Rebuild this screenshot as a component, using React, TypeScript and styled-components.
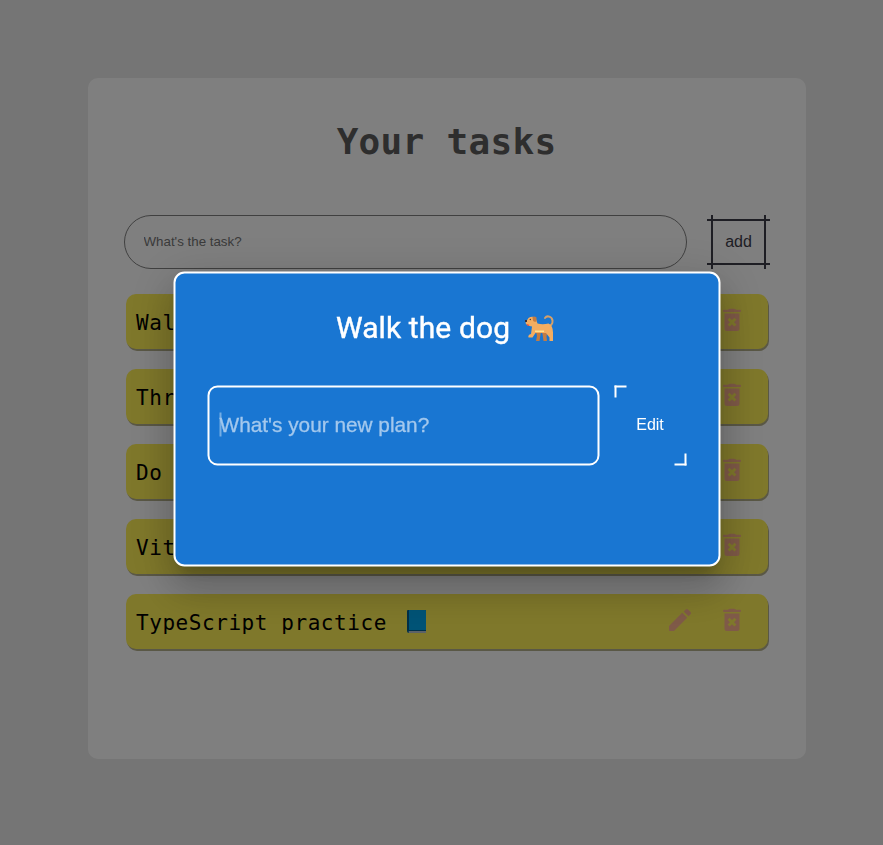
import React from "react";
import styled, { createGlobalStyle } from "styled-components";

const GlobalStyle = createGlobalStyle`
  *, *::before, *::after { box-sizing: border-box; }
  html, body { margin: 0; padding: 0; background: #ebebeb; overflow: hidden; }
`;

const mono = `"DejaVu Sans Mono", "Liberation Mono", monospace`;
const sans = `"Liberation Sans", Arial, sans-serif`;

const Page = styled.main`
  height: 845px;
  padding: 78px 77px 0 88px;
  background: #ebebeb;
`;

const Card = styled.section`
  height: 681px;
  padding: 39px 37px 0 36px;
  border-radius: 10px;
  background: #fff;
`;

const Title = styled.h1`
  margin: 0;
  height: 50px;
  font: bold 36px/50px ${mono};
  letter-spacing: 0.3px;
  text-align: center;
  color: #5c5c5c;
`;

const AddForm = styled.form`
  display: flex;
  justify-content: space-between;
  margin-top: 48px;
`;

const TaskInput = styled.input`
  width: 563px;
  height: 54px;
  padding: 0 18px 2px 18.5px;
  border: 1px solid #808080;
  border-radius: 27px;
  background: transparent;
  font: 13.333px ${sans};
  outline: none;
  &::placeholder { color: #757575; opacity: 1; }
`;

const AddButton = styled.button`
  position: relative;
  width: 55px;
  height: 46px;
  margin: 4px 3px 0 0;
  padding: 0;
  border: 2px solid #3d3d49;
  background: none;
  color: #3d3d49;
  font: 16px ${sans};
  &::before, &::after {
    content: "";
    position: absolute;
    pointer-events: none;
  }
  &::before {
    inset: -2px -6px;
    border: solid #3d3d49;
    border-width: 2px 0;
  }
  &::after {
    inset: -6px -2px;
    border: solid #3d3d49;
    border-width: 0 2px;
  }
`;

const TaskList = styled.ul`
  display: flex;
  flex-direction: column;
  gap: 20px;
  margin: 25px 1px 0 2px;
  padding: 0;
  list-style: none;
`;

const TaskRow = styled.li`
  display: flex;
  align-items: center;
  height: 55px;
  padding: 0 27px 0 10px;
  border-radius: 10px;
  background: #fff056;
  box-shadow: 1px 2px 0 #b4b08c;
`;

const TaskText = styled.span`
  display: flex;
  align-items: center;
  flex: 1;
  padding-top: 2px;
  font: 21px/28px ${mono};
  letter-spacing: 0.56px;
  white-space: pre;
  color: #000;
`;

const Actions = styled.span`
  display: flex;
  gap: 31px;
  margin-top: -3px;
  color: #ffb490;
  svg { display: block; }
`;

const BookSvg = styled.svg`
  margin: -2px 0 0 19px;
`;

const Backdrop = styled.div`
  position: fixed;
  inset: 0;
  display: flex;
  justify-content: center;
  padding: 271.5px 0 0 11px;
  background: rgba(0, 0, 0, 0.5);
`;

const Dialog = styled.div`
  width: 547px;
  height: 295px;
  padding: 31px 31px 0 32px;
  border: 2px solid #fff;
  border-radius: 11px;
  background: #1976d2;
  transform: translate(-0.5px, -0.5px);
  box-shadow:
    0 11px 15px -7px rgba(0, 0, 0, 0.2),
    0 24px 38px 3px rgba(0, 0, 0, 0.14),
    0 9px 46px 8px rgba(0, 0, 0, 0.12);
`;

const DialogTitle = styled.h2`
  display: flex;
  justify-content: center;
  align-items: center;
  gap: 13px;
  height: 46px;
  margin: 0 3px 35px 0;
  font: 400 30px/46px Roboto, sans-serif;
  letter-spacing: 0.1px;
  -webkit-text-stroke: 0.4px #fff;
  color: #fff;
`;

const EditForm = styled.form`
  display: flex;
  gap: 15px;
`;

const PlanField = styled.div`
  display: flex;
  align-items: center;
  width: 392px;
  height: 80px;
  padding: 0 0 1px 10px;
  border: 2px solid #fff;
  border-radius: 10px;
`;

const Caret = styled.span`
  width: 2px;
  height: 24px;
  margin-right: -1.5px;
  background: #75ade4;
`;

const PlanPlaceholder = styled.span`
  font: 20.8px/24px ${sans};
  color: #a3c8ed;
  -webkit-text-stroke: 0.3px #a3c8ed;
`;

const EditButton = styled.button`
  position: relative;
  width: 72px;
  height: 80px;
  padding: 0 0 2px;
  border: 0;
  background: none;
  color: #fff;
  font: 16px/20px ${sans};
  &::before, &::after {
    content: "";
    position: absolute;
    width: 12px;
    height: 12px;
    border: solid #fff;
  }
  &::before { top: 0; left: 0; border-width: 2px 0 0 2px; }
  &::after { right: 0; bottom: 0; border-width: 0 2px 2px 0; }
`;

const PencilIcon = () => (
  <svg width="24" height="24" viewBox="0 0 24 24" fill="currentColor">
    <path d="M1 18 14.200 4.800 19.200 9.800 6 23H1.700Q1 23 1 22.300zM15.700 3.500 17.800 1.400Q18.900.5 20 1.400L22.600 4Q23.500 5.100 22.600 6.200L20.500 8.300z" />
  </svg>
);

const TrashIcon = () => (
  <svg width="18" height="24" viewBox="0 0 18 24" fill="currentColor">
    <path d="M1 1.800H5Q5.500.7 7 .7H11Q12.500.7 13 1.800H17Q18 1.800 18 2.900T17 4H1Q0 4 0 2.900T1 1.800z" />
    <path fillRule="evenodd" d="M1.500 5.500H16.500V20.500Q16.500 23 14 23H4Q1.500 23 1.500 20.500zM9 12.200 6.600 9.800 4.600 11.800 7 14.200 4.600 16.600 6.600 18.600 9 16.200 11.400 18.600 13.400 16.600 11 14.200 13.400 11.800 11.400 9.800z" />
  </svg>
);

const BookIcon = () => (
  <BookSvg width="22" height="26" viewBox="0 0 22 26">
    <path d="M2 1h17q1 0 1 1v22H3q-2 0-2-2V2q0-1 1-1z" fill="#005f91" />
    <path d="M3 1h16q1 0 1 1v19H3z" fill="#00a6ed" />
    <path d="M3 22h17v2H3q-1-1 0-2z" fill="#b9c5d0" />
  </BookSvg>
);

const DogSvg = styled.svg`
  margin-top: 2px;
`;

const DogIcon = () => (
  <DogSvg width="32" height="30" viewBox="0 0 32 30">
    <path d="M24 12.500C27 13 29.500 10.500 29 7C28.500 3 23.500 1.500 21.500 4.500" fill="none" stroke="#d3a06b" strokeWidth="2" strokeLinecap="round" />
    <path d="M12.500 18h5L16 27.500h-3.500l1-5zM18 18h6l-1 5 .5 4.500H20l-1-7z" fill="#c37c43" />
    <path d="M5 4.500Q8 2.500 12 4L14 10Q19 11.500 25 10Q29.500 12 29.500 19V27.500H26V24L22.500 19.500H12L9 24H5Q4 21.500 7.500 20.500L8.500 13Q3 12.500 2 9.500L3 7.500z" fill="#f3ad61" />
    <path d="M9 3.500Q11 2.500 13 4V8Q10.500 9 9.500 7z" fill="#c37c43" />
    <path d="M11.500 17h9v1.500h-9z" fill="#ffe290" />
    <circle cx="6.800" cy="6" r=".7" fill="#45343d" />
    <path d="M1.500 6.500h2v2h-2z" fill="#34313e" />
    <path d="M3 10.500l3 1-1.500 1z" fill="#f8312f" />
  </DogSvg>
);

const tasks = [
  { text: "Walk the dog" },
  { text: "Throw out the trash" },
  { text: "Do the dishes" },
  { text: "Vite practice" },
  { text: "TypeScript practice", book: true },
];

export default function App() {
  return (
    <>
      <GlobalStyle />
      <Page>
        <Card>
          <Title>Your tasks</Title>
          <AddForm>
            <TaskInput placeholder="What's the task?" />
            <AddButton type="button">add</AddButton>
          </AddForm>
          <TaskList>
            {tasks.map((task) => (
              <TaskRow key={task.text}>
                <TaskText>{task.text}{task.book && <BookIcon />}</TaskText>
                <Actions><PencilIcon /><TrashIcon /></Actions>
              </TaskRow>
            ))}
          </TaskList>
        </Card>
      </Page>
      <Backdrop>
        <Dialog role="dialog" aria-modal="true">
          <DialogTitle>Walk the dog <DogIcon /></DialogTitle>
          <EditForm>
            <PlanField>
              <Caret />
              <PlanPlaceholder>What's your new plan?</PlanPlaceholder>
            </PlanField>
            <EditButton type="button">Edit</EditButton>
          </EditForm>
        </Dialog>
      </Backdrop>
    </>
  );
}
